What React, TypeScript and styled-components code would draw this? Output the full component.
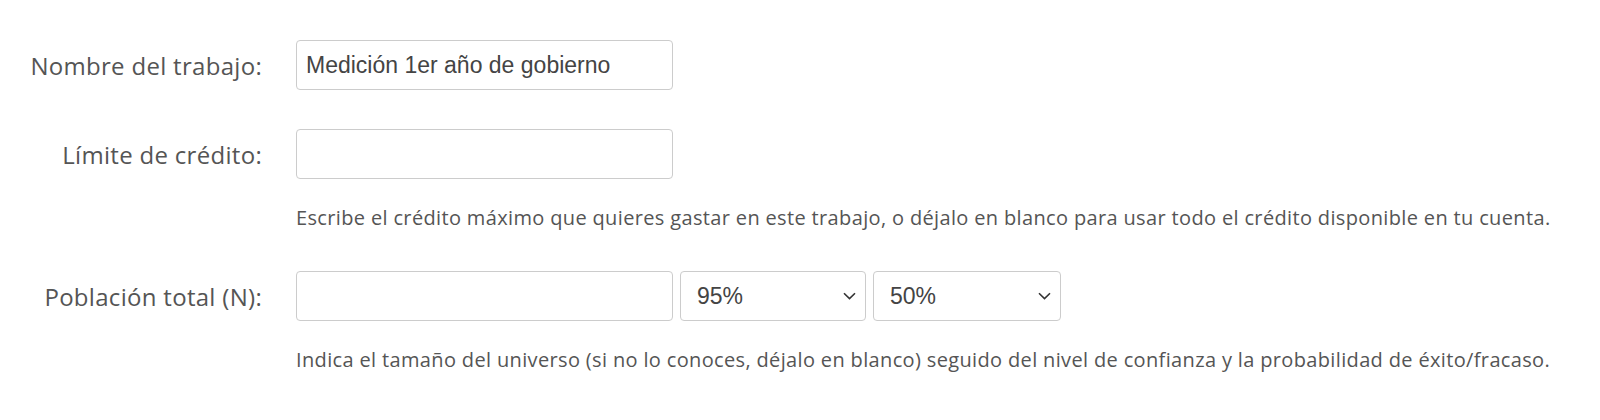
import React from "react"
import styled, { createGlobalStyle } from "styled-components"

const GlobalStyle = createGlobalStyle`
  html, body {
    margin: 0;
    padding: 0;
    background: #fff;
  }
  body {
    font-family: "Open Sans", "Liberation Sans", sans-serif;
    color: #555;
  }
`

const Form = styled.form`
  padding: 40px 0 0 0;
  display: grid;
  grid-template-columns: 262px 1fr;
  column-gap: 34px;
`

const Label = styled.label`
  display: flex;
  align-items: center;
  justify-content: flex-end;
  height: 50px;
  font-size: 24px;
  letter-spacing: 0.3px;
  color: #555;
  white-space: nowrap;
`

const Field = styled.div<{ $spacing: number }>`
  display: flex;
  flex-direction: column;
  margin-bottom: ${p => p.$spacing}px;
`

const Controls = styled.div`
  display: flex;
  gap: 7px;
`

const TextInput = styled.input`
  box-sizing: border-box;
  width: 377px;
  height: 50px;
  padding: 0 9px;
  border: 1px solid #ccc;
  border-radius: 4px;
  font-family: "Liberation Sans", Arial, sans-serif;
  font-size: 23px;
  color: #444;
  background: #fff;
  outline: none;
`

const SelectWrap = styled.div<{ $width: number }>`
  position: relative;
  width: ${p => p.$width}px;
  height: 50px;
`

const Select = styled.select`
  box-sizing: border-box;
  appearance: none;
  width: 100%;
  height: 100%;
  padding: 0 16px;
  border: 1px solid #ccc;
  border-radius: 4px;
  font-family: "Liberation Sans", Arial, sans-serif;
  font-size: 23px;
  color: #444;
  background: #fff;
  outline: none;
`

const Chevron = styled.svg`
  position: absolute;
  right: 10px;
  top: 50%;
  transform: translateY(-50%);
  pointer-events: none;
`

const Help = styled.p`
  margin: 25px 0 0;
  font-size: 20px;
  letter-spacing: 0.35px;
  line-height: 27px;
  color: #555;
  white-space: nowrap;
`

const ChevronIcon = () => (
  <Chevron width="13" height="8" viewBox="0 0 13 8">
    <path d="M1 1.2 L6.5 6.6 L12 1.2" fill="none" stroke="#333" strokeWidth="1.6" />
  </Chevron>
)

const PercentSelect = ({ width, value, options }: { width: number; value: string; options: string[] }) => (
  <SelectWrap $width={width}>
    <Select defaultValue={value}>
      {options.map(o => (
        <option key={o} value={o}>
          {o}
        </option>
      ))}
    </Select>
    <ChevronIcon />
  </SelectWrap>
)

const App = (): JSX.Element => (
  <>
    <GlobalStyle />
    <Form onSubmit={e => e.preventDefault()}>
      <Label htmlFor="nombre">Nombre del trabajo:</Label>
      <Field $spacing={39}>
        <TextInput id="nombre" defaultValue="Medición 1er año de gobierno" />
      </Field>

      <Label htmlFor="limite">Límite de crédito:</Label>
      <Field $spacing={40}>
        <TextInput id="limite" />
        <Help>
          Escribe el crédito máximo que quieres gastar en este trabajo, o déjalo en blanco para usar
          todo el crédito disponible en tu cuenta.
        </Help>
      </Field>

      <Label htmlFor="poblacion">Población total (N):</Label>
      <Field $spacing={0}>
        <Controls>
          <TextInput id="poblacion" />
          <PercentSelect width={186} value="95%" options={["90%", "95%", "99%"]} />
          <PercentSelect width={188} value="50%" options={["50%", "60%", "70%"]} />
        </Controls>
        <Help>
          Indica el tamaño del universo (si no lo conoces, déjalo en blanco) seguido del nivel de
          confianza y la probabilidad de éxito/fracaso.
        </Help>
      </Field>
    </Form>
  </>
)

export default App
